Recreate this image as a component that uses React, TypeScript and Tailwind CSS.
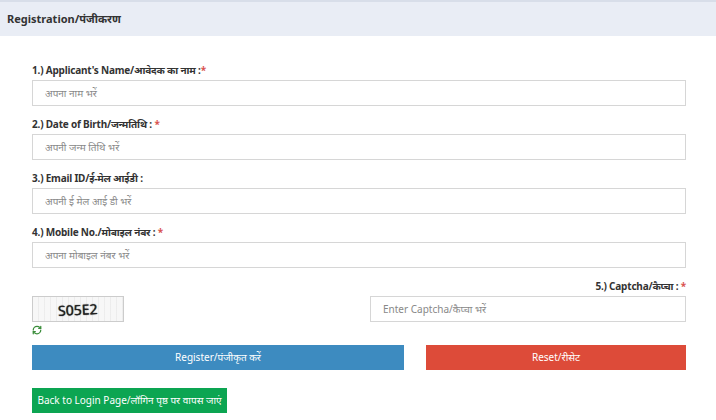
import { RefreshCw } from "lucide-react"

const label = "block leading-[12px] text-[10px] font-bold text-[#333] [font-family:'DejaVu_Serif',serif] tracking-[-0.2px]"
const input =
  "w-full h-[26px] border border-[#d6d6d6] px-3 text-[10px] text-[#555] placeholder:text-[#888] bg-white outline-none [font-family:'Open_Sans',sans-serif]"

function Field({ text, ph, disabled }: { text: string; ph: string; disabled?: boolean }) {
  return (
    <div className="flex flex-col gap-[4px]">
      <label className={label}>
        {text}
        <span className="text-[#d9534f]">*</span>
      </label>
      <input className={input + (disabled ? " bg-[#eeeeee]" : "")} placeholder={ph} disabled={disabled} />
    </div>
  )
}

export default function App() {
  return (
    <div className="w-[716px] h-[420px] bg-white overflow-hidden">
      <div className="h-[36px] bg-[#e9edf5] border-t-2 border-[#d8dee9] flex items-center px-[7px]">
        <span className="text-[11px] font-bold text-[#333] [font-family:'DejaVu_Serif',serif]">Registration/पंजीकरण</span>
      </div>
      <div className="pl-[32px] pr-[30px] pt-[28px] flex flex-col gap-[12px]">
        <Field text="1.) Applicant's Name/आवेदक का नाम :" ph="अपना नाम भरें" />
        <Field text="2.) Date of Birth/जन्मतिथि : " ph="अपनी जन्म तिथि भरें" disabled />
        <div className="flex flex-col gap-[4px]">
          <label className={label}>3.) Email ID/ई-मेल आईडी :</label>
          <input className={input} placeholder="अपनी ई मेल आई डी भरें" />
        </div>
        <Field text="4.) Mobile No./मोबाइल नंबर : " ph="अपना मोबाइल नंबर भरें" />
        <div className="flex justify-between">
          <div className="flex flex-col pt-[16px]">
            <div className="w-[92px] h-[26px] border border-[#ccc] bg-[repeating-linear-gradient(90deg,#f7f7f7_0,#f7f7f7_5px,#e2e2e2_6px),repeating-linear-gradient(0deg,#fff_0,#fff_5px,#ddd_6px)] flex items-center justify-center">
              <span className="text-[14px] text-[#222] [font-family:'Liberation_Sans',sans-serif] -rotate-3 [text-shadow:0_0_1px_#000]">S05E2</span>
            </div>
            <RefreshCw className="w-[10px] h-[10px] text-[#3a8d3a] mt-[3px]" strokeWidth={3} />
          </div>
          <div className="w-[316px] flex flex-col items-end gap-[4px]">
            <label className={label}>
              5.) Captcha/कैप्चा : <span className="text-[#d9534f]">*</span>
            </label>
            <input className={input} placeholder="Enter Captcha/कैप्चा भरें" />
          </div>
        </div>
        <div className="flex gap-[22px] -mt-[2px] [font-family:'Open_Sans',sans-serif] text-[10px] text-white">
          <button className="w-[372px] h-[25px] bg-[#3d8bc0]">Register/पंजीकृत करें</button>
          <button className="flex-1 h-[25px] bg-[#dd4b39]">Reset/रीसेट</button>
        </div>
        <div className="mt-[4px]">
          <button className="w-[195px] h-[25px] bg-[#0ca552] text-white text-[10px] [font-family:'Open_Sans',sans-serif]">
            Back to Login Page/लॉगिन पृष्ठ पर वापस जाएं
          </button>
        </div>
      </div>
    </div>
  )
}
